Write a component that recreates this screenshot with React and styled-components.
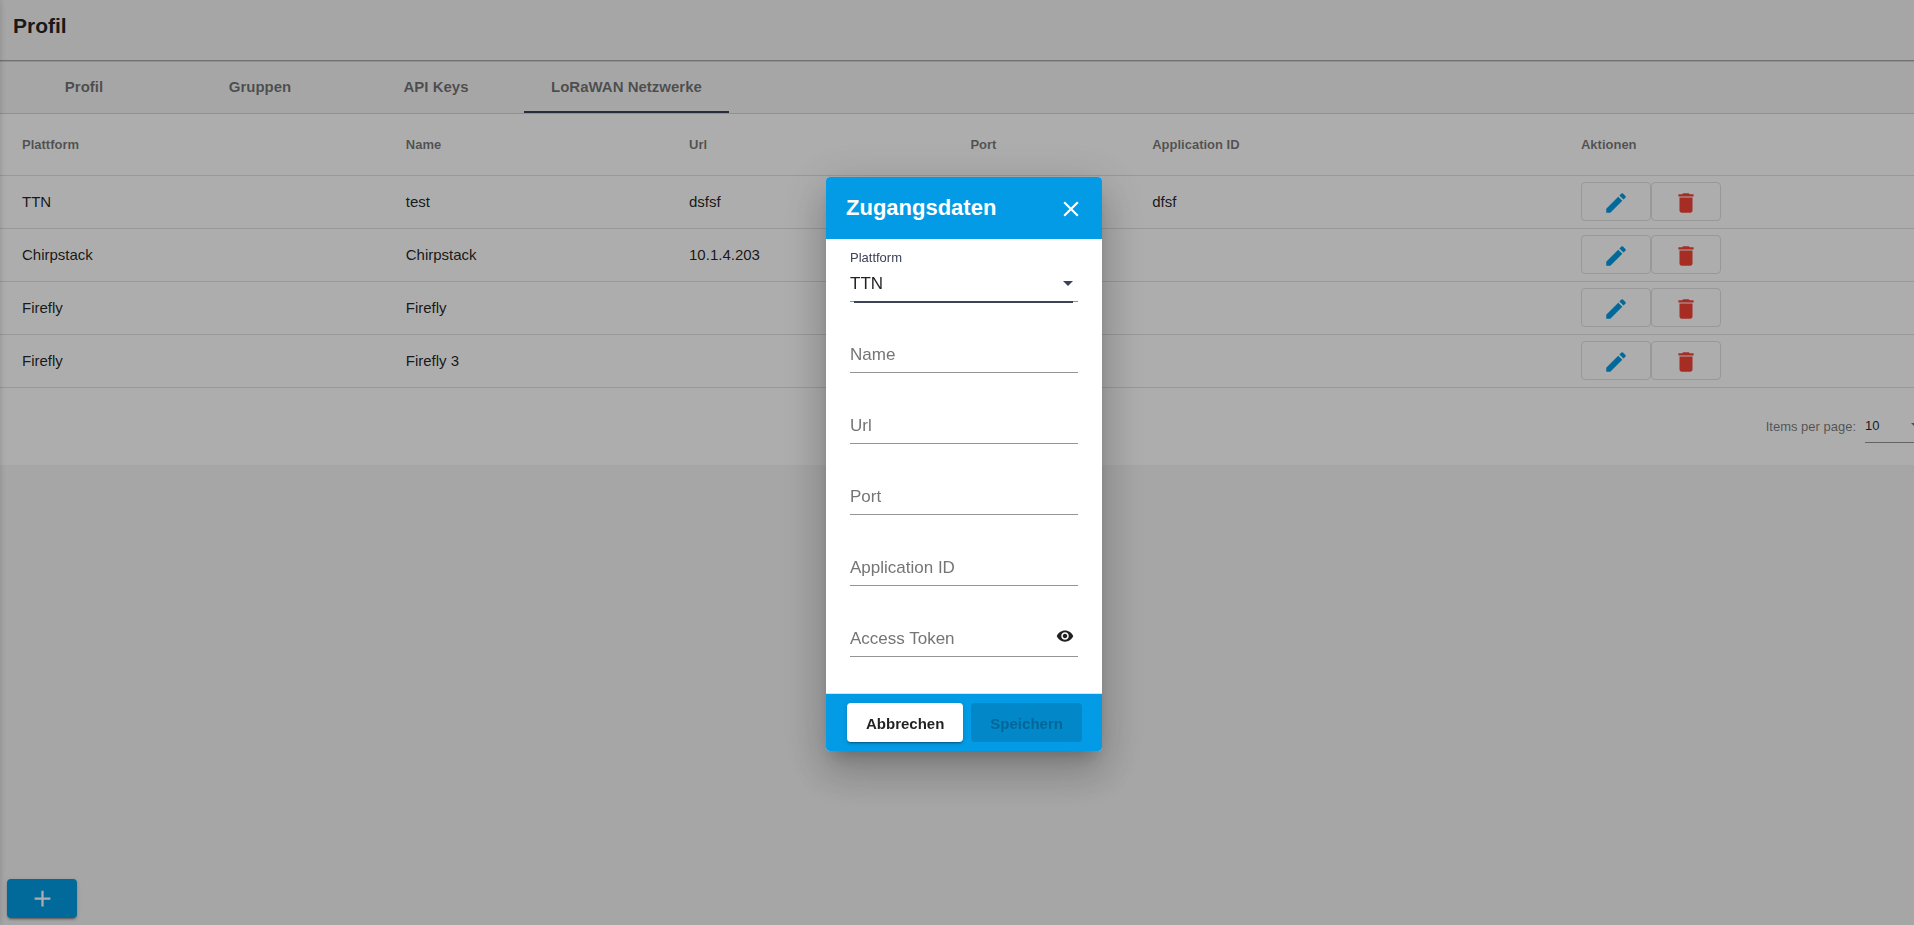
import React from "react";
import styled, { createGlobalStyle, css } from "styled-components";
import {
  MdAdd,
  MdClose,
  MdDelete,
  MdEdit,
  MdVisibility,
} from "react-icons/md";

const colors = {
  primary: "#039be5",
  accent: "#3c4257",
  danger: "#f44336",
  text: "rgba(0, 0, 0, 0.87)",
  muted: "rgba(0, 0, 0, 0.54)",
  line: "rgba(0, 0, 0, 0.12)",
};

const GlobalStyle = createGlobalStyle`
  * {
    box-sizing: border-box;
  }

  body {
    margin: 0;
    overflow: hidden;
    background: #f5f5f5;
    color: ${colors.text};
    font-family: "Liberation Sans", Arial, sans-serif;
    font-size: 15px;
  }

  button, input, select {
    font-family: inherit;
  }

  svg {
    display: block;
  }
`;

const Page = styled.div`
  display: flex;
  flex-direction: column;
  min-height: 100vh;
  overflow: hidden;
`;

const SidenavShadow = styled.div`
  position: fixed;
  top: 0;
  bottom: 0;
  left: -8px;
  width: 8px;
  box-shadow: 0 0 6px rgba(0, 0, 0, 0.2);
`;

const PageHeader = styled.header`
  display: flex;
  align-items: center;
  height: 61px;
  padding: 0 13px 9px;
  border-bottom: 1px solid #a8a8a8;
`;

const PageTitle = styled.h1`
  margin: 0;
  font-size: 21px;
  line-height: 24px;
`;

const Tabs = styled.nav`
  display: flex;
  margin-left: -4px;
  height: 53px;
  border-top: 1px solid #d4d4d4;
  border-bottom: 1px solid #d4d4d4;
`;

const Tab = styled.a`
  display: flex;
  align-items: center;
  justify-content: center;
  min-width: 176px;
  padding: 0 27px;
  border-bottom: 2px solid transparent;
  color: ${colors.muted};
  font-weight: bold;
  text-decoration: none;

  ${({ $active }) =>
    $active &&
    css`
      border-bottom-color: ${colors.accent};
    `}
`;

const Panel = styled.main`
  background: #fff;
`;

const Table = styled.table`
  width: 100%;
  table-layout: fixed;
  border-collapse: collapse;
`;

const HeadCell = styled.th`
  width: ${({ $width }) => $width};
  height: 61px;
  padding: 0;
  border-bottom: 1px solid ${colors.line};
  color: ${colors.muted};
  font-size: 13px;
  text-align: left;

  &:first-child {
    padding-left: 22px;
  }
`;

const Cell = styled.td`
  height: 53px;
  padding: 0;
  border-bottom: 1px solid ${colors.line};

  &:first-child {
    padding-left: 22px;
  }
`;

const Actions = styled.div`
  display: flex;
`;

const ActionButton = styled.button`
  display: flex;
  align-items: center;
  justify-content: center;
  width: 70px;
  height: 39px;
  padding: 2px 0 0;
  border: 1px solid ${colors.line};
  border-radius: 4px;
  background: transparent;
  color: ${({ $color }) => $color};
  font-size: 26px;
`;

const Paginator = styled.div`
  display: flex;
  align-items: center;
  justify-content: flex-end;
  gap: 9px;
  height: 77px;
  margin-right: -7px;
  color: ${colors.muted};
  font-size: 13px;
`;

const PageSize = styled.div`
  display: flex;
  align-items: center;
  width: 56px;
  height: 34px;
  border-bottom: 1px solid rgba(0, 0, 0, 0.42);
`;

const NativeSelect = styled.select`
  flex: 1;
  min-width: 0;
  height: 24px;
  padding: 0;
  border: 0;
  outline: 0;
  appearance: none;
  background: transparent;
  color: ${colors.text};
  font-size: ${({ $size }) => $size};
`;

const AddButton = styled.button`
  display: flex;
  align-items: center;
  justify-content: center;
  width: 70px;
  height: 39px;
  margin: auto 0 7px 7px;
  padding: 0;
  border: 0;
  border-radius: 4px;
  background: ${colors.primary};
  box-shadow: 0 3px 1px -2px rgba(0, 0, 0, 0.2), 0 2px 2px rgba(0, 0, 0, 0.14),
    0 1px 5px rgba(0, 0, 0, 0.12);
  color: #fff;
  font-size: 27px;
`;

const Backdrop = styled.div`
  position: fixed;
  inset: 0;
  display: flex;
  align-items: center;
  justify-content: center;
  padding: 3px 0 0 14px;
  background: rgba(0, 0, 0, 0.32);
`;

const Dialog = styled.form`
  width: 276px;
  overflow: hidden;
  border-radius: 4px;
  background: #fff;
  box-shadow: 0 11px 15px -7px rgba(0, 0, 0, 0.2),
    0 24px 38px 3px rgba(0, 0, 0, 0.14), 0 9px 46px 8px rgba(0, 0, 0, 0.12);
`;

const DialogHeader = styled.header`
  display: flex;
  align-items: center;
  justify-content: space-between;
  height: 62px;
  padding: 0 18px 0 20px;
  background: ${colors.primary};
  color: #fff;
`;

const DialogTitle = styled.h2`
  margin: 0;
  font-size: 22px;
  line-height: 26px;
`;

const IconButton = styled.button`
  padding: ${({ $padding }) => $padding};
  border: 0;
  background: transparent;
  color: inherit;
  font-size: ${({ $size }) => $size};
`;

const DialogBody = styled.div`
  padding: 0 24px 28px;
  border-bottom: 1px solid #e0e0e0;
`;

const Field = styled.div`
  display: flex;
  flex-direction: column;
  justify-content: flex-end;
  height: 71px;
  padding-bottom: 8px;
`;

const FieldLabel = styled.label`
  margin-bottom: 4px;
  color: ${colors.accent};
  font-size: 13px;
  line-height: 18px;
`;

const Control = styled.div`
  position: relative;
  display: flex;
  align-items: center;
  padding-bottom: ${({ $gap }) => $gap || "5px"};
  border-bottom: 1px solid #949494;
`;

/* the ripple line of the focused field is a bit shorter than the underline */
const FocusLine = styled.span`
  position: absolute;
  right: 5px;
  bottom: -2px;
  left: 4px;
  height: 2px;
  background: ${colors.accent};
`;

const Arrow = styled.span`
  width: 0;
  margin-right: ${({ $right }) => $right || 0};
  border: 5px solid transparent;
  border-top-color: ${({ $color }) => $color};
  border-bottom: 0;
  pointer-events: none;
`;

const TextInput = styled.input`
  flex: 1;
  min-width: 0;
  height: 24px;
  padding: 0;
  border: 0;
  outline: 0;
  background: transparent;
  color: ${colors.text};
  font-size: 17px;

  &::placeholder {
    color: #757575;
  }
`;

const DialogFooter = styled.footer`
  display: flex;
  gap: 8px;
  padding: 9px 21px;
  background: ${colors.primary};
`;

const DialogButton = styled.button`
  height: 39px;
  padding: 2px 19px 0;
  border: 0;
  border-radius: 4px;
  background: #fff;
  box-shadow: 0 3px 1px -2px rgba(0, 0, 0, 0.2), 0 2px 2px rgba(0, 0, 0, 0.14),
    0 1px 5px rgba(0, 0, 0, 0.12);
  color: ${colors.text};
  font-size: 15px;
  font-weight: bold;

  &:disabled {
    background: rgba(0, 0, 0, 0.12);
    box-shadow: none;
    color: rgba(0, 0, 0, 0.26);
  }
`;

const tabs = ["Profil", "Gruppen", "API Keys", "LoRaWAN Netzwerke"];

const columns = [
  { title: "Plattform", width: "21.2%" },
  { title: "Name", width: "14.8%" },
  { title: "Url", width: "14.7%" },
  { title: "Port", width: "9.5%" },
  { title: "Application ID", width: "22.4%" },
  { title: "Aktionen", width: "17.4%" },
];

const networks = [
  { platform: "TTN", name: "test", url: "dsfsf", port: "", appId: "dfsf" },
  { platform: "Chirpstack", name: "Chirpstack", url: "10.1.4.203" },
  { platform: "Firefly", name: "Firefly" },
  { platform: "Firefly", name: "Firefly 3" },
];

const textFields = ["Name", "Url", "Port", "Application ID"];

const NetworkTable = () => (
  <Table>
    <thead>
      <tr>
        {columns.map(({ title, width }) => (
          <HeadCell key={title} $width={width}>
            {title}
          </HeadCell>
        ))}
      </tr>
    </thead>
    <tbody>
      {networks.map((network) => (
        <tr key={network.name}>
          <Cell>{network.platform}</Cell>
          <Cell>{network.name}</Cell>
          <Cell>{network.url}</Cell>
          <Cell>{network.port}</Cell>
          <Cell>{network.appId}</Cell>
          <Cell>
            <Actions>
              <ActionButton aria-label="Bearbeiten" $color={colors.primary}>
                <MdEdit />
              </ActionButton>
              <ActionButton aria-label="Löschen" $color={colors.danger}>
                <MdDelete />
              </ActionButton>
            </Actions>
          </Cell>
        </tr>
      ))}
    </tbody>
  </Table>
);

const CredentialsDialog = () => (
  <Dialog role="dialog" aria-labelledby="dialog-title">
    <DialogHeader>
      <DialogTitle id="dialog-title">Zugangsdaten</DialogTitle>
      <IconButton
        type="button"
        aria-label="Schließen"
        $size="26px"
        $padding="2px 0 0"
      >
        <MdClose />
      </IconButton>
    </DialogHeader>
    <DialogBody>
      <Field>
        <FieldLabel htmlFor="platform">Plattform</FieldLabel>
        <Control $gap="6px">
          <NativeSelect id="platform" $size="17px" defaultValue="TTN">
            <option>TTN</option>
            <option>Chirpstack</option>
            <option>Firefly</option>
          </NativeSelect>
          <Arrow $right="5px" $color={colors.accent} />
          <FocusLine />
        </Control>
      </Field>
      {textFields.map((label) => (
        <Field key={label}>
          <Control>
            <TextInput aria-label={label} placeholder={label} />
          </Control>
        </Field>
      ))}
      <Field>
        <Control>
          <TextInput
            type="password"
            aria-label="Access Token"
            placeholder="Access Token"
          />
          <IconButton
            type="button"
            aria-label="Token anzeigen"
            $size="18px"
            $padding="0 4px 6px"
          >
            <MdVisibility />
          </IconButton>
        </Control>
      </Field>
    </DialogBody>
    <DialogFooter>
      <DialogButton type="button">Abbrechen</DialogButton>
      <DialogButton type="submit" disabled>
        Speichern
      </DialogButton>
    </DialogFooter>
  </Dialog>
);

const App = () => {
  return (
    <>
      <GlobalStyle />
      <Page>
        <PageHeader>
          <PageTitle>Profil</PageTitle>
        </PageHeader>
        <Tabs>
          {tabs.map((tab) => (
            <Tab key={tab} href="#" $active={tab === "LoRaWAN Netzwerke"}>
              {tab}
            </Tab>
          ))}
        </Tabs>
        <Panel>
          <NetworkTable />
          <Paginator>
            <label htmlFor="page-size">Items per page:</label>
            <PageSize>
              <NativeSelect id="page-size" $size="13px" defaultValue="10">
                <option>10</option>
                <option>25</option>
                <option>50</option>
              </NativeSelect>
              <Arrow $color={colors.muted} />
            </PageSize>
          </Paginator>
        </Panel>
        <AddButton aria-label="Hinzufügen">
          <MdAdd />
        </AddButton>
        <SidenavShadow />
      </Page>
      <Backdrop>
        <CredentialsDialog />
      </Backdrop>
    </>
  );
};

export default App;
